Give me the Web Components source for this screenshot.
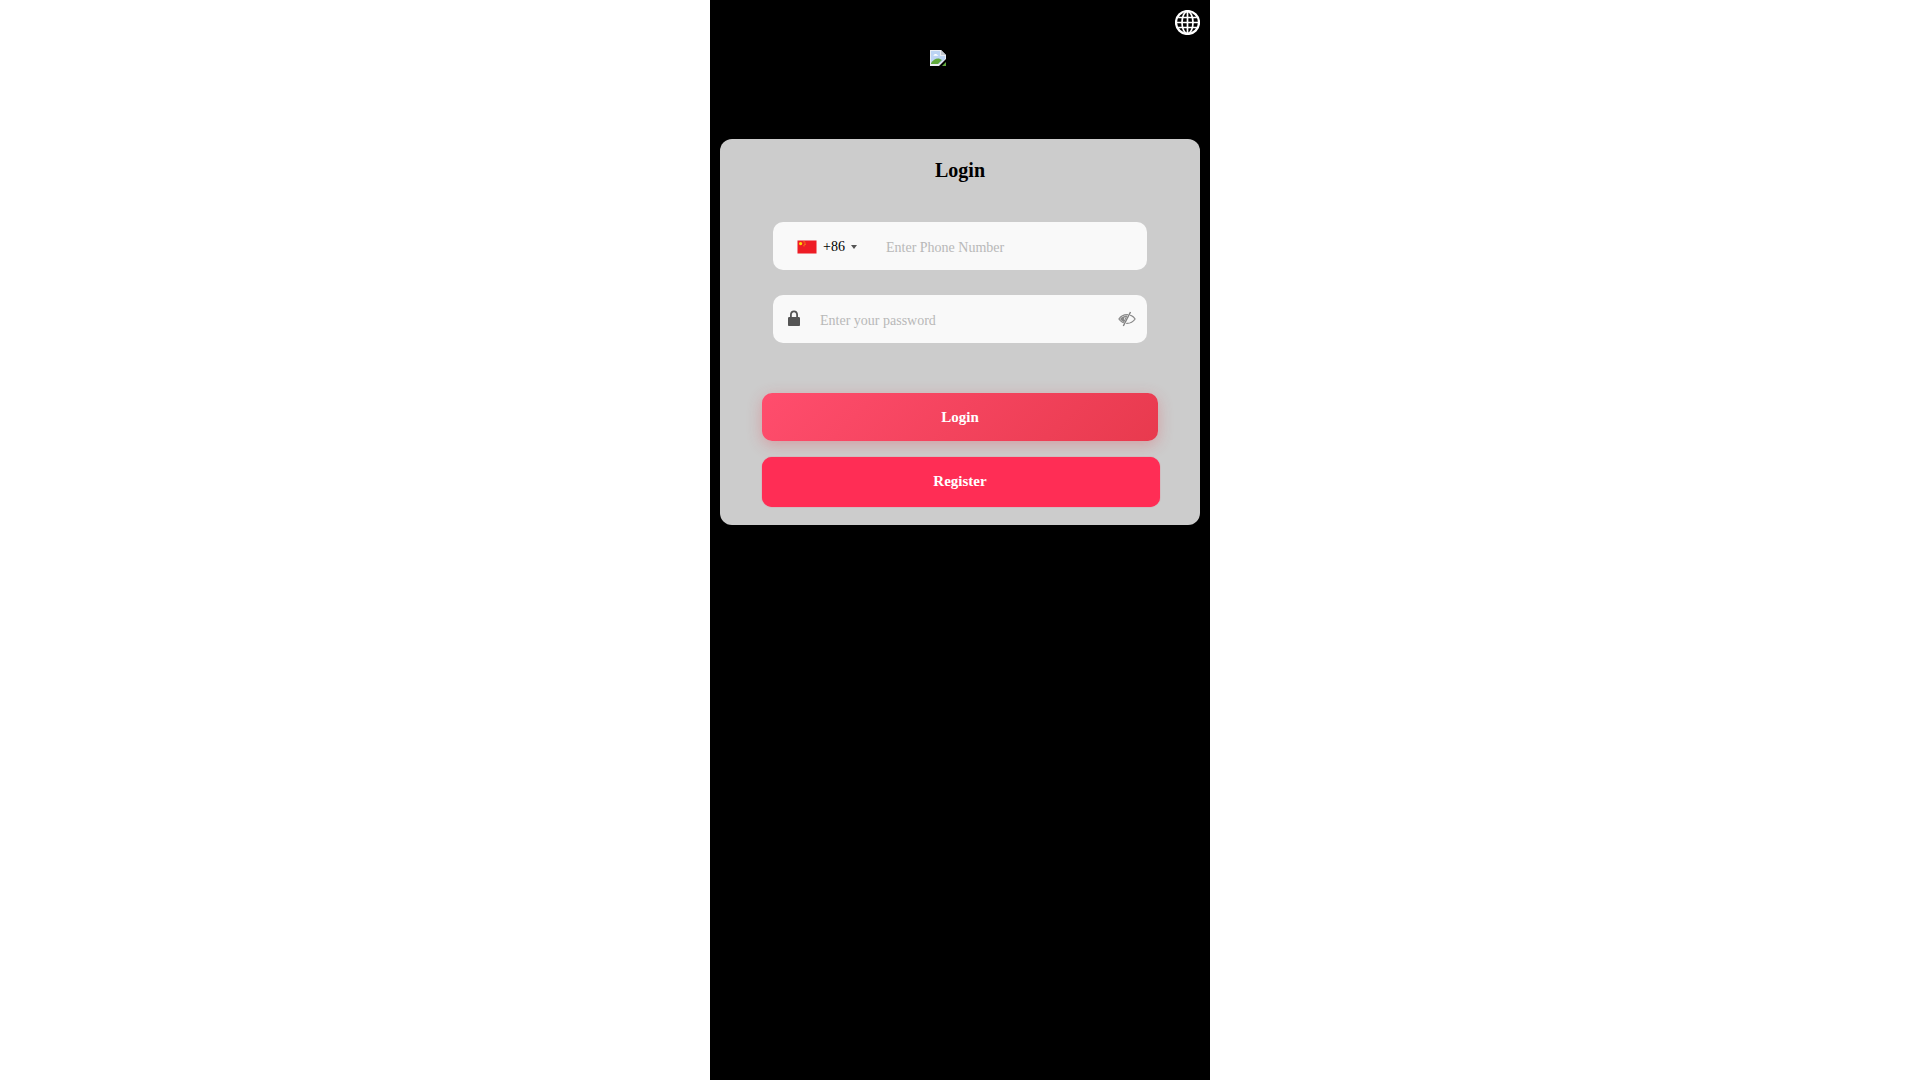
<!DOCTYPE html>
<html lang="en">
<head>
<meta charset="utf-8">
<title>Login</title>
<style>
  html, body { margin: 0; padding: 0; background: #fff; }
  body { font-family: "Liberation Serif", serif; }
</style>
</head>
<body>
<login-app></login-app>

<template id="login-field-tpl">
  <style>
    :host {
      display: flex;
      align-items: center;
      width: 374px;
      height: 48px;
      background: #f9f9f9;
      border-radius: 10px;
      font-size: 14px;
      box-sizing: border-box;
    }
    .placeholder { color: #b8b8b8; white-space: nowrap; flex: 1; position: relative; top: 2px; }
    ::slotted([slot="end"]) { margin-right: 11px; }
  </style>
  <slot name="start"></slot>
  <span class="placeholder"><slot></slot></span>
  <slot name="end"></slot>
</template>

<template id="login-button-tpl">
  <style>
    :host {
      display: flex;
      align-items: center;
      justify-content: center;
      box-sizing: border-box;
      border-radius: 10px;
      color: #fff;
      font-size: 15px;
      font-weight: bold;
      margin-left: 42px;
      user-select: none;
    }
    :host([kind="login"]) {
      width: 396px;
      height: 48px;
      background: linear-gradient(135deg, #ff4d6d, #e83a4e);
      box-shadow: 0 4px 15px rgba(230, 57, 70, .3);
    }
    :host([kind="register"]) {
      width: 398px;
      height: 50px;
      margin-top: 16px;
      background: #ff2d55;
      box-shadow: 0 0 1px #ff2d55;
    }
    span { position: relative; }
    :host([kind="register"]) span { left: -1px; top: -1px; }
  </style>
  <span><slot></slot></span>
</template>

<template id="login-card-tpl">
  <style>
    :host {
      display: flex;
      flex-direction: column;
      margin: 0 10px;
      height: 386px;
      background: #ccc;
      border-radius: 12px;
      color: #000;
    }
    h1 {
      margin: 0;
      padding-top: 19px;
      font-size: 20px;
      line-height: 24px;
      font-weight: bold;
      text-align: center;
    }
    .fields {
      display: flex;
      flex-direction: column;
      gap: 25px;
      margin: 40px 0 50px 53px;
    }
  </style>
  <h1>Login</h1>
  <div class="fields">
    <login-field>
      <div slot="start" style="display:flex;align-items:center;margin:2px 0 0 24px;width:89px;color:#000">
        <svg style="display:block;margin-right:6px" width="20" height="14" viewBox="0 0 20 14">
          <rect width="20" height="14" fill="#f5f5f5"/>
          <rect x=".5" y=".5" width="19" height="13" fill="#ee1c25"/>
          <circle cx="3.600" cy="3.600" r="1.600" fill="#ffde00"/>
          <circle cx="7" cy="1.800" r=".5" fill="#ffde00"/>
          <circle cx="8" cy="3" r=".5" fill="#ffde00"/>
          <circle cx="8" cy="4.600" r=".5" fill="#ffde00"/>
          <circle cx="7" cy="5.800" r=".5" fill="#ffde00"/>
        </svg>
        <span>+86</span>
        <svg style="display:block;margin-left:6px" width="6" height="4" viewBox="0 0 6 4"><path d="M0 0h6L3 4z" fill="#555"/></svg>
      </div>
      Enter Phone Number
    </login-field>
    <login-field>
      <svg slot="start" style="display:block;margin:-3px 0 0 15px;width:32px" width="32" height="16" viewBox="0 0 32 16">
        <path d="M0 15V8.300C0 7.600.5 7 1.200 7H2V4.800C2 2.100 3.600.6 6 .6s4 1.500 4 4.200V7h.8c.7 0 1.200.6 1.200 1.300V15c0 .6-.5 1-1.200 1H1.200C.5 16 0 15.600 0 15zM3.800 7h4.400V4.800C8.200 3 7.300 2.200 6 2.200S3.800 3 3.800 4.800z" fill="#555"/>
      </svg>
      Enter your password
      <svg slot="end" width="18" height="16" viewBox="0 0 18 16" fill="none">
        <path d="M.9 8C2.800 5.200 5.700 3.600 9 3.600s6.200 1.600 8.100 4.400C15.200 10.800 12.300 12.400 9 12.400S2.800 10.800.9 8z" stroke="#888" stroke-width="1.200"/>
        <path d="M2 8C3.600 5.800 6.500 4.400 10.500 4.500L7 11.500C5 11 3.300 9.800 2 8z" fill="#888"/>
        <path d="M7.200 6.200C6.600 6.800 6.400 7.600 6.500 8.500" stroke="#f9f9f9" stroke-width="1"/>
        <path d="M12 2 6.200 14" stroke="#f9f9f9" stroke-width="2.200"/>
        <path d="M12.500 1 5.300 15" stroke="#808080" stroke-width="1.400"/>
      </svg>
    </login-field>
  </div>
  <login-button kind="login">Login</login-button>
  <login-button kind="register">Register</login-button>
</template>

<template id="login-app-tpl">
  <style>
    :host {
      display: block;
      width: 500px;
      min-height: 1080px;
      margin: 0 auto;
      background: #000;
      font-family: "Liberation Serif", serif;
    }
    header {
      display: flex;
      flex-direction: column;
      height: 139px;
      box-sizing: border-box;
      padding: 10px 10px 0 220px;
    }
    .globe { display: block; align-self: flex-end; }
    .logo { display: block; margin-top: 15px; }
  </style>
  <header>
    <svg class="globe" width="25" height="25" viewBox="0 0 25 25" fill="none">
      <g stroke="#fff" stroke-width="1.700">
        <circle cx="12.500" cy="12.500" r="11.500" stroke-width="2.200"/>
        <ellipse cx="12.500" cy="12.500" rx="5.500" ry="11"/>
        <path d="M12.500 1.500v22M1.500 12.500h22M3.200 7.500h18.600M3.200 17.500h18.600"/>
      </g>
    </svg>
    <svg class="logo" width="16" height="16" viewBox="0 0 16 16">
      <path d="M0 0h11l5 5v4l-7 7H0z" fill="#e9edf3"/>
      <path d="M11 0l5 5h-5z" fill="#c2c8d0"/>
      <path d="M1 1h9v5h5v3l-6 5H1z" fill="#bcd4f4"/>
      <path d="M3.500 5.500c.5-1.500 3-2 4-.5l1 .8h-5z" fill="#fff"/>
      <path d="M1 14V13c2-3 5-5 8-4.500l3 1.500-4 4z" fill="#60a93c"/>
      <path d="M12 16l4-4v4z" fill="#60a93c"/>
    </svg>
  </header>
  <login-card></login-card>
</template>

<script>
  function defineFromTemplate (name, template_id) {
    customElements.define(name, class extends HTMLElement {
      constructor () {
        super();
        const shadow = this.attachShadow({mode: "open"});
        shadow.appendChild(document.getElementById(template_id).content.cloneNode(true));
      }
    });
  }

  defineFromTemplate("login-field", "login-field-tpl");
  defineFromTemplate("login-button", "login-button-tpl");
  defineFromTemplate("login-card", "login-card-tpl");
  defineFromTemplate("login-app", "login-app-tpl");
</script>
</body>
</html>
